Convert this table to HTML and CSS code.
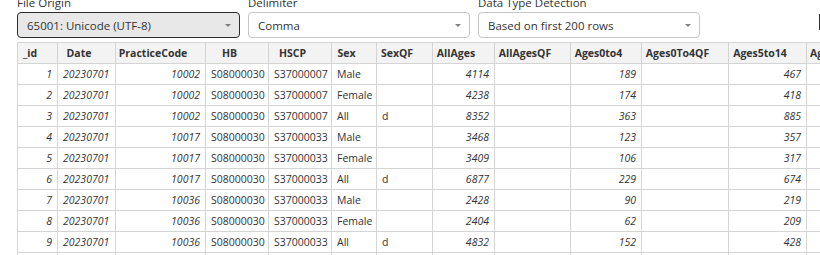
FILE: index.html
```html
<!DOCTYPE html>
<html>
<head>
<meta charset="utf-8">
<link rel="stylesheet" href="styles.css">
</head>
<body>
<div class="page">
  <div class="controls">
    <div class="field">
      <div class="label">File Origin</div>
      <div class="select focused"><span>65001: Unicode (UTF-8)</span><i class="caret"></i></div>
    </div>
    <div class="field">
      <div class="label">Delimiter</div>
      <div class="select"><span>Comma</span><i class="caret"></i></div>
    </div>
    <div class="field">
      <div class="label">Data Type Detection</div>
      <div class="select"><span>Based on first 200 rows</span><i class="caret"></i></div>
    </div>
    <div class="field extra">
      <div class="label">&nbsp;</div>
      <div class="edge"></div>
    </div>
  </div>
  <table class="grid">
    <colgroup>
      <col class="w40"><col class="w58"><col class="w90"><col class="w63"><col class="w63"><col class="w45"><col class="w56"><col class="w62"><col class="w76"><col class="w71"><col class="w87"><col class="w78"><col class="w90">
    </colgroup>
    <thead>
      <tr><th>_id</th><th>Date</th><th>PracticeCode</th><th>HB</th><th>HSCP</th><th>Sex</th><th>SexQF</th><th>AllAges</th><th>AllAgesQF</th><th>Ages0to4</th><th>Ages0To4QF</th><th>Ages5to14</th><th>Ages5to14QF</th></tr>
    </thead>
    <tbody>
      <tr><td class="n">1</td><td class="i">20230701</td><td class="n">10002</td><td>S08000030</td><td>S37000007</td><td>Male</td><td></td><td class="n">4114</td><td></td><td class="n">189</td><td></td><td class="n">467</td><td></td></tr>
      <tr><td class="n">2</td><td class="i">20230701</td><td class="n">10002</td><td>S08000030</td><td>S37000007</td><td>Female</td><td></td><td class="n">4238</td><td></td><td class="n">174</td><td></td><td class="n">418</td><td></td></tr>
      <tr><td class="n">3</td><td class="i">20230701</td><td class="n">10002</td><td>S08000030</td><td>S37000007</td><td>All</td><td>d</td><td class="n">8352</td><td></td><td class="n">363</td><td></td><td class="n">885</td><td></td></tr>
      <tr><td class="n">4</td><td class="i">20230701</td><td class="n">10017</td><td>S08000030</td><td>S37000033</td><td>Male</td><td></td><td class="n">3468</td><td></td><td class="n">123</td><td></td><td class="n">357</td><td></td></tr>
      <tr><td class="n">5</td><td class="i">20230701</td><td class="n">10017</td><td>S08000030</td><td>S37000033</td><td>Female</td><td></td><td class="n">3409</td><td></td><td class="n">106</td><td></td><td class="n">317</td><td></td></tr>
      <tr><td class="n">6</td><td class="i">20230701</td><td class="n">10017</td><td>S08000030</td><td>S37000033</td><td>All</td><td>d</td><td class="n">6877</td><td></td><td class="n">229</td><td></td><td class="n">674</td><td></td></tr>
      <tr><td class="n">7</td><td class="i">20230701</td><td class="n">10036</td><td>S08000030</td><td>S37000033</td><td>Male</td><td></td><td class="n">2428</td><td></td><td class="n">90</td><td></td><td class="n">219</td><td></td></tr>
      <tr><td class="n">8</td><td class="i">20230701</td><td class="n">10036</td><td>S08000030</td><td>S37000033</td><td>Female</td><td></td><td class="n">2404</td><td></td><td class="n">62</td><td></td><td class="n">209</td><td></td></tr>
      <tr><td class="n">9</td><td class="i">20230701</td><td class="n">10036</td><td>S08000030</td><td>S37000033</td><td>All</td><td>d</td><td class="n">4832</td><td></td><td class="n">152</td><td></td><td class="n">428</td><td></td></tr>
      <tr><td class="n">10</td><td class="i">20230701</td><td class="n">10041</td><td>S08000030</td><td>S37000033</td><td>Male</td><td></td><td class="n">3112</td><td></td><td class="n">140</td><td></td><td class="n">301</td><td></td></tr>
    </tbody>
  </table>
</div>
</body>
</html>
```
FILE: styles.css
```css
html, body {
  margin: 0;
  padding: 0;
  background: #ffffff;
  overflow: hidden;
}
body {
  font-family: "Open Sans", "Noto Sans", sans-serif;
  color: #333333;
  width: 820px;
  height: 255px;
}
.page {
  padding-left: 17px;
  margin-top: -5px;
}
.controls {
  display: flex;
  gap: 8px;
  width: 1000px;
}
.field {
  display: flex;
  flex-direction: column;
  gap: 1px;
}
.label {
  font-size: 11.5px;
  line-height: 16px;
  color: #333333;
}
.select {
  box-sizing: border-box;
  width: 222px;
  height: 26px;
  border: 1px solid #c6c6c6;
  border-radius: 4px;
  background: #ffffff;
  display: flex;
  align-items: center;
  justify-content: space-between;
  padding: 0 8px 0 9px;
  font-size: 11.5px;
  color: #333333;
}
.select.focused {
  background: #e8e8e8;
  border-color: #2b2b2b;
  width: 223px;
}
.caret {
  width: 0;
  height: 0;
  border-left: 3px solid transparent;
  border-right: 3px solid transparent;
  border-top: 3px solid #808080;
  margin-top: 1px;
}
.extra {
  margin-left: 111px;
}
.edge {
  width: 2px;
  height: 16px;
  margin-top: 2px;
  background: #333333;
}
.grid {
  margin-top: 4px;
  border-collapse: collapse;
  table-layout: fixed;
  width: 879px;
  font-size: 10.5px;
  color: #333333;
}
.w40 { width: 40px; }
.w45 { width: 45px; }
.w56 { width: 56px; }
.w58 { width: 58px; }
.w62 { width: 62px; }
.w63 { width: 63px; }
.w71 { width: 71px; }
.w76 { width: 76px; }
.w78 { width: 78px; }
.w87 { width: 87px; }
.w90 { width: 90px; }
.grid th, .grid td {
  border: 1px solid #d4d4d4;
  height: 20px;
  padding: 0 5px;
  white-space: nowrap;
  overflow: hidden;
  line-height: 20px;
  box-sizing: border-box;
}
.grid th {
  background: #f3f3f3;
  font-weight: 700;
  text-align: center;
  padding: 0 15px 0 0;
  color: #333333;
}
.grid td {
  text-align: left;
}
.grid td.n {
  text-align: right;
  font-style: italic;
}
.grid td.i {
  font-style: italic;
}
```
